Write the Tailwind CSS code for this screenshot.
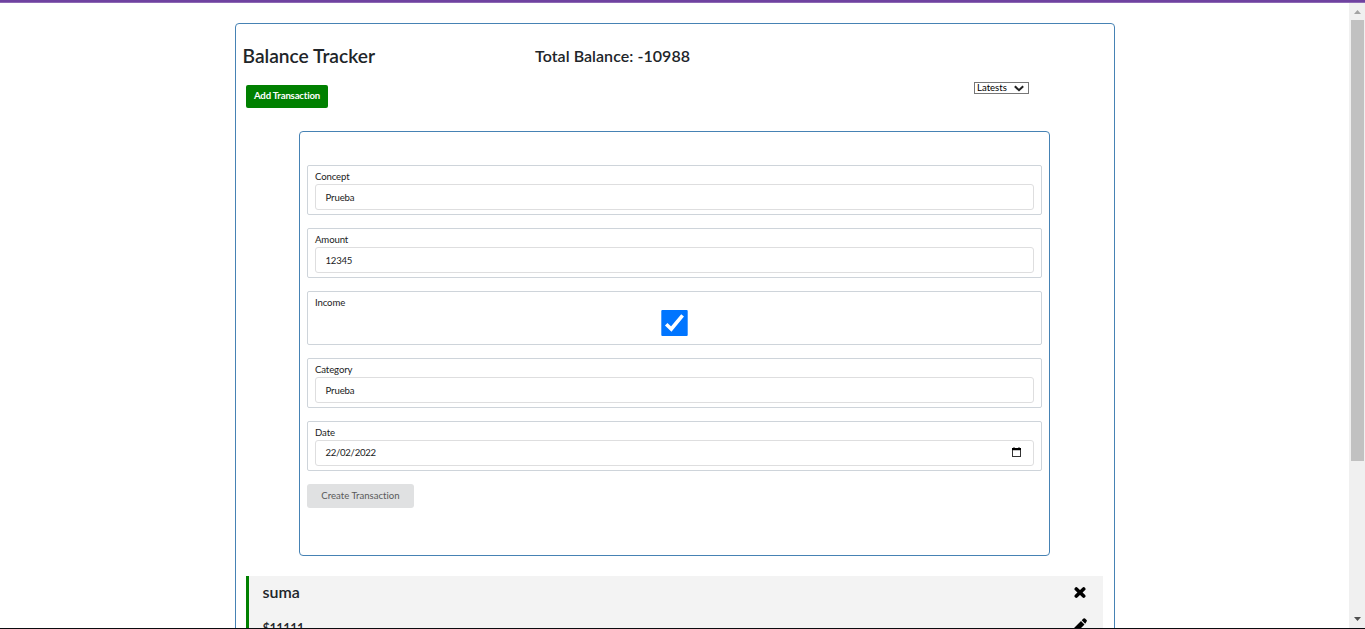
<!DOCTYPE html>
<html lang="en">
<head>
<meta charset="utf-8">
<title>Balance Tracker</title>
<script src="https://cdn.jsdelivr.net/npm/@tailwindcss/browser@4"></script>
</head>
<body class="h-[629px] overflow-hidden bg-white font-['Lato',sans-serif] text-[#212529] [font-variant-ligatures:none]">
<div class="flex h-[629px] flex-col">
  <div class="h-[3px] shrink-0 border-b border-[#8d68b4] bg-[#6f42a0]"></div>
  <div class="flex min-h-0 flex-1">
    <main class="flex-1 overflow-hidden pl-[235px] pt-5">
      <section class="h-[700px] w-[880px] rounded-[4px] border border-[#4682b4]">
        <header class="flex h-[61px] pl-[6.500px] pt-[19px]">
          <h1 class="w-[292px] text-[19.200px] font-semibold leading-[26px]">Balance Tracker</h1>
          <h2 class="pl-[0.5px] text-[16px] font-semibold leading-[26px] tracking-[0.050px]">Total Balance: -10988</h2>
        </header>
        <div class="flex h-[46px] justify-between pl-[10px] pr-[85px]">
          <button class="h-[23px] w-[82px] rounded-[2px] bg-[#008000] pb-px text-[9.6px] font-bold leading-[22px] tracking-[-0.180px] text-white whitespace-nowrap">Add Transaction</button>
          <div class="-mt-[3px] flex h-3 w-[55px] items-center justify-between border border-[#767676] pl-[2px] pr-1 text-[9.6px] leading-[10px] text-black">
            <span>Latests</span>
            <svg width="10" height="7" viewBox="0 0 10 7" fill="none" stroke="#222" stroke-width="2"><path d="M.8 1.2 5 5.2 9.2 1.2"/></svg>
          </div>
        </div>
        <form class="ml-[63px] flex h-[425px] w-[751px] flex-col gap-[13px] rounded-[4px] border border-[#4682b4] px-[7px] pt-[33px] text-[9.6px] leading-[12px] tracking-[-0.120px] text-[#1b1c1d]">
          <div class="h-[50px] rounded-[2px] border border-[#ced4da] px-[7px] pt-[5px]">
            <label class="block h-[13px]">Concept</label>
            <div class="h-[26px] rounded-[3px] border border-[#dededf] pl-[9.5px] pt-[6.5px]">Prueba</div>
          </div>
          <div class="h-[50px] rounded-[2px] border border-[#ced4da] px-[7px] pt-[5px]">
            <label class="block h-[13px]">Amount</label>
            <div class="h-[26px] rounded-[3px] border border-[#dededf] pl-[9.5px] pt-[6.5px] tracking-[-0.250px]">12345</div>
          </div>
          <div class="h-[54px] rounded-[2px] border border-[#ced4da] px-[7px] pt-[5px]">
            <label class="block h-[13px]">Income</label>
            <svg class="mx-auto" width="27" height="26" viewBox="0 0 27 26"><rect x=".3" width="26.4" height="26" rx="1" fill="#0075ff"/><path d="M5.2 14.2 10.3 19 21.6 5.3" fill="none" stroke="#fff" stroke-width="3.6"/></svg>
          </div>
          <div class="h-[50px] rounded-[2px] border border-[#ced4da] px-[7px] pt-[5px]">
            <label class="block h-[13px]">Category</label>
            <div class="h-[26px] rounded-[3px] border border-[#dededf] pl-[9.5px] pt-[6.5px]">Prueba</div>
          </div>
          <div class="h-[50px] rounded-[2px] border border-[#ced4da] px-[7px] pt-[5px]">
            <label class="block h-[13px]">Date</label>
            <div class="flex h-[26px] justify-between rounded-[3px] border border-[#dededf] pl-[9.5px] pr-3 pt-[6px]"><span class="tracking-[-0.300px]">22/02/2022</span>
              <svg width="9" height="10" viewBox="0 0 9 10"><path d="M1.5 0h1v1h4V0h1v1H9v9H0V1h1.500z" fill="#333"/><path d="M0 1h9v2H0z" fill="#000"/><path d="M1 3.300h7V9H1z" fill="#fff"/></svg>
            </div>
          </div>
          <button type="button" class="h-6 w-[107px] rounded-[3px] bg-[#e0e1e2] pb-px text-[9.6px] leading-[22px] tracking-normal text-[#5a5a5a] whitespace-nowrap">Create Transaction</button>
        </form>
        <article class="ml-[10px] mt-5 flex h-[80px] w-[857px] justify-between border-l-[3px] border-[#008000] bg-[#f3f3f3] pl-[13.500px] pr-[17px] pt-[6px]">
          <div class="font-semibold leading-5">
            <h3 class="text-[16px]">suma</h3>
            <p class="mt-[16px] text-[12.800px] tracking-[-0.500px]">$11111</p>
          </div>
          <div class="flex flex-col items-end gap-[20px] pt-[5px]">
            <svg width="12" height="11" viewBox="0 0 13 12" fill="none" stroke="#000" stroke-width="4" stroke-linecap="round"><path d="M2.500 2.200 10.500 9.800M10.500 2.200 2.500 9.800"/></svg>
            <svg class="-mr-px" width="14" height="14" viewBox="0 0 14 14"><path d="M0 13.500 1 10 8 3l3.500 3.500-7 7zM8.700 2.300 10.500.5q.7-.7 1.500 0L13.600 2q.7.800 0 1.500L12.200 5.800z"/></svg>
          </div>
        </article>
      </section>
    </main>
    <div class="flex w-4 shrink-0 flex-col items-center bg-[#f0f0f0]">
      <svg class="mt-[7px]" width="7" height="4" viewBox="0 0 7 4"><path d="M0 4 3.500 0 7 4z" fill="#a3a3a3"/></svg>
      <div class="ml-px mt-[6px] h-[441px] w-[13px] bg-[#c1c1c1]"></div>
      <svg class="mt-[156px]" width="7" height="4" viewBox="0 0 7 4"><path d="M0 0h7L3.500 4z" fill="#505050"/></svg>
    </div>
  </div>
  <div class="h-px shrink-0 bg-[#0b0b0f]"></div>
</div>
</body>
</html>
